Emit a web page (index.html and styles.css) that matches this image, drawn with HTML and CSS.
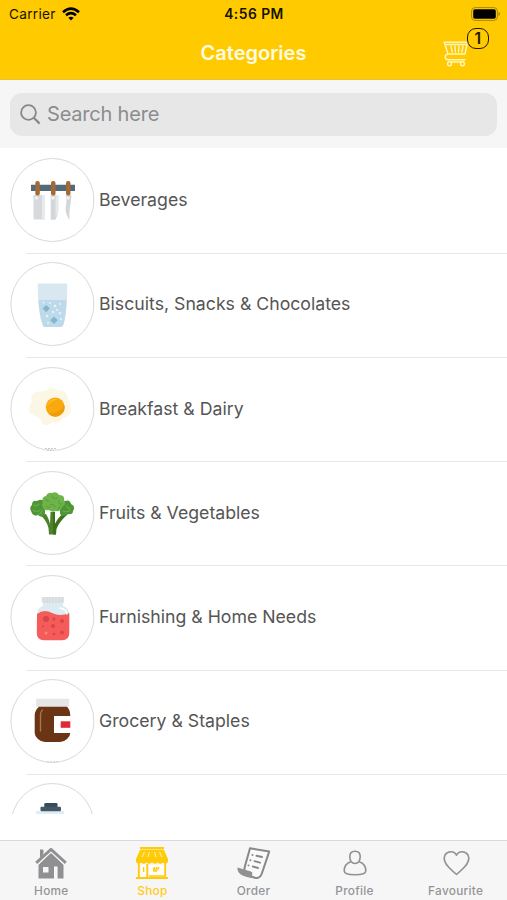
FILE: index.html
```html
<!DOCTYPE html>
<html lang="en">
<head>
<meta charset="utf-8">
<title>Categories</title>
<link rel="stylesheet" href="styles.css">
</head>
<body>
<div class="app">
  <header class="header">
    <div class="status">
      <div class="carrier"><span>Carrier</span>
        <svg class="wifi" width="18" height="14" viewBox="0 0 18 14"><g fill="none" stroke="#000" stroke-width="2.6"><path d="M1 5.2Q9-2 17 5.2"/><path d="M4 8.2Q9 4 14 8.2"/></g><path d="M6.4 10.8Q9 8.5 11.6 10.8L9 13.4Z"/></svg>
      </div>
      <span class="time">4:56 PM</span>
      <svg class="battery" width="30" height="14" viewBox="0 0 30 14"><rect x=".6" y=".6" width="25.8" height="12.8" rx="3.5" fill="none" stroke="#a88911"/><rect x="2.2" y="2.2" width="22.6" height="9.6" rx="1.8"/><path d="M27.6 4.6Q30 7 27.6 9.4Z" fill="#8e7410"/></svg>
    </div>
    <div class="navbar">
      <h1 class="title">Categories</h1>
      <div class="cart">
        <svg width="26" height="28" viewBox="0 0 26 28" fill="none" stroke="#fff6bd" stroke-width="1.4" stroke-linecap="round" stroke-linejoin="round"><path d="M1 2.2H24.5L22 14H5L1.3 2.2M3.2 4.5H24M5 14Q2.2 14.4 2.2 17Q2.2 19.8 5 19.8H22M8 6.2L9.2 12M12 6.2L12.4 12M16 6.2L15.5 12M20 6.2L18.8 12"/><circle cx="6.5" cy="23.8" r="2"/><circle cx="19.5" cy="23.8" r="2"/><path d="M8.5 22H17.5"/></svg>
        <span class="badge">1</span>
      </div>
    </div>
  </header>

  <div class="searchbar">
    <div class="field">
      <svg width="21" height="21" viewBox="0 0 21 21" fill="none" stroke="#88888b" stroke-width="1.8"><circle cx="8.5" cy="8.5" r="7.4"/><path d="M13.8 13.8L19.6 19.6" stroke-width="2.2"/></svg>
      <span>Search here</span>
    </div>
  </div>

  <main class="list">
    <div class="row">
      <svg class="thumb" viewBox="0 0 84 84"><circle class="ring" cx="42.4" cy="42" r="41.5"/>
        <path fill="#526b7c" d="M21 26.7H65V33H21z"/>
        <path fill="#d6dadd" d="M23.5 37H35V61.5H23.5z"/><path fill="#e8eaec" d="M32 37H35V61.5H32z"/>
        <path fill="#d3d7da" d="M40.7 37H48.3V52Q47.8 58 45.5 61.7H40.7z"/><path fill="#e6e8ea" d="M45.5 37H48.3V52Q47.8 56 45.5 59z"/>
        <path fill="#d3d7da" d="M56 37H61.5Q61 44 60 49Q59 55 59.5 62Q55.5 56 55.5 50Q57 45 56 37z"/>
        <g fill="#f4f6f7"><circle cx="26.5" cy="40" r="1.5"/><circle cx="43" cy="40" r="1.5"/><circle cx="58" cy="40" r="1.5"/></g>
        <g fill="#a56a32"><rect x="25.3" y="23" width="4.5" height="14.5" rx="2"/><rect x="41" y="23" width="4.5" height="14.5" rx="2"/><rect x="56" y="23" width="4.5" height="14.5" rx="2"/></g>
      </svg>
      <div class="label">Beverages</div>
    </div>
    <div class="row">
      <svg class="thumb" viewBox="0 0 84 84"><circle class="ring" cx="42.4" cy="42" r="41.5"/>
        <path fill="#d8e7f0" d="M27.7 23Q27.7 21.5 29 21.5H56Q57.5 21.5 57.3 23Q57 52 53.5 62Q53 65 50.5 65H35Q33 65 32.5 62Q28 52 27.7 23z"/>
        <path fill="#bddaea" d="M28.6 38H56.6Q56 55 53.5 62Q53 65 50.5 65H35Q33 65 32.5 62Q29.5 54 28.6 38z"/>
        <path fill="#86b6cf" d="M36.2 43L39.8 46.6L36.2 50.2L32.6 46.6zM44 54.5L47.8 58.3L44 62.1L40.2 58.3z"/>
        <g fill="#e6f3fa"><circle cx="40" cy="41" r="1"/><circle cx="45" cy="44" r="1.3"/><circle cx="50" cy="42" r="1"/><circle cx="43" cy="50" r="1.2"/><circle cx="50" cy="51" r="1.2"/><circle cx="37" cy="54" r="1.2"/><circle cx="38" cy="61" r="1"/><circle cx="33.5" cy="40.5" r="1"/><circle cx="47" cy="48" r="1"/><circle cx="51" cy="57" r="1"/></g>
      </svg>
      <div class="label">Biscuits, Snacks &amp; Chocolates</div>
    </div>
    <div class="row">
      <svg class="thumb" viewBox="0 0 84 84"><circle class="ring" cx="42.4" cy="42" r="41.5"/>
        <path fill="#fcf7e4" d="M27 24.5Q33 25 37 23Q43 19.5 48 23Q58 24 58 32Q62 38 60.5 44Q59 50 53 51Q50 57 43 55Q37 60 32 57Q31 50 25 49Q17 46 19 40Q23 35 21 30Q22 26 27 24.5z"/>
        <circle cx="45.2" cy="40" r="9.4" fill="#f9a90e"/><path fill="#ef9b0b" d="M54.4 38A9.4 9.4 0 0 1 38.5 46.7Q50 46 54.4 38z"/><path fill="#fbbb2b" d="M37 39A8.5 8.5 0 0 1 48 32.2Q40 35 37 39z"/>
        <path stroke="#c9c9c9" stroke-dasharray="2 1" d="M35 81.5H46M37 83H44"/>
      </svg>
      <div class="label">Breakfast &amp; Dairy</div>
    </div>
    <div class="row">
      <svg class="thumb" viewBox="0 0 84 84"><circle class="ring" cx="42.4" cy="42" r="41.5"/>
        <path fill="#4c8129" d="M30 44L36 43Q40 50 40 54L40.5 41H45L45 53Q48 46 53 43L58 43Q49 51 46.5 58L46 63.4H39L38.5 57Q36 48 30 44z"/>
        <path fill="#3b701e" d="M43 41H45V53L53 43L56 44Q48 51 46 58V63.4H43z"/>
        <path fill="#4e9635" d="M21 40Q19 36 22 34Q22 29 27 30Q32 27 35 31V43Q32 48 28 44Q23 46 21 40zM63 40Q66 35 61 33Q60 28 55 30Q51 29 50 33V43Q53 47 57 43Q63 44 63 40z"/>
        <path fill="#6fb44a" d="M33 32Q31 26 36 25Q38 21 42 22Q47 20 49 24Q55 24 54 29Q57 34 52 36Q51 41 46 40Q42 42 39 39Q33 40 33 36Q31 34 33 32z"/>
        <g fill="none" stroke="#559b38" stroke-width="1" stroke-linecap="round"><path d="M36 28Q36 31 39 30M42 25Q43 29 47 27M40 34Q44 32 45 36M49 30Q48 34 52 33M36 35Q38 38 40 36M48 38Q50 38 50 35"/></g>
        <g fill="none" stroke="#68ad47" stroke-width="1.1" stroke-linecap="round"><path d="M24 34Q26 36 29 33M23 39Q27 42 30 39M28 43Q32 43 32 39M57 34Q56 37 60 37M53 40Q57 42 60 39"/></g>
      </svg>
      <div class="label">Fruits &amp; Vegetables</div>
    </div>
    <div class="row">
      <svg class="thumb" viewBox="0 0 84 84"><circle class="ring" cx="42.4" cy="42" r="41.5"/>
        <path fill="#dbebf1" d="M33 27H53V31Q59.5 33 59.3 41V44H27V40Q27 33 33 31z"/>
        <rect x="31.7" y="22" width="22.4" height="6" rx="1" fill="#e1e4e7"/><path stroke="#ced4d8" stroke-width="1" d="M34 22V28M37 22V28M40 22V28M43 22V28M46 22V28M49 22V28M52 22V28"/>
        <path fill="#f45b59" d="M27 39Q34 33.5 42 38Q50 42 59.3 38V58Q59.3 65.2 52 65.2H34Q26.8 65.2 26.8 58z"/>
        <path fill="none" stroke="#fff" stroke-width="1.5" stroke-linecap="round" d="M50 33Q56 34 57 39"/>
        <g fill="#d9454a"><circle cx="36" cy="44" r="3"/><circle cx="44" cy="44" r="1.5"/><circle cx="52" cy="46" r="2"/><circle cx="43" cy="51" r="2"/><circle cx="33" cy="51" r="1"/><circle cx="52" cy="57.5" r="2"/><circle cx="44" cy="59" r="1.3"/></g><circle cx="36" cy="58" r="1.5" fill="#f98a80"/>
      </svg>
      <div class="label">Furnishing &amp; Home Needs</div>
    </div>
    <div class="row">
      <svg class="thumb" viewBox="0 0 84 84"><circle class="ring" cx="42.4" cy="42" r="41.5"/>
        <rect x="26.2" y="19.7" width="33" height="8.2" rx="1" fill="#e6e6e7"/>
        <path fill="#6b3414" d="M29 27.7H57Q60.3 31 60.3 37V54Q60.3 57 57 60Q54 63 50 63H35Q31 63 28 60Q24.7 57 24.7 54V36Q25 31 29 27.7z"/>
        <path fill="none" stroke="#a9754c" stroke-width="1.4" stroke-linecap="round" d="M32.5 31Q30.5 33 30.5 36V52"/>
        <path fill="#fff" d="M44 37H61V54H44z"/><path fill="#df2935" d="M50.7 42.3H60.3V48.8H50.7z"/>
        <path stroke="#d2d2d2" stroke-dasharray="2 1" d="M37 82.8H48"/>
      </svg>
      <div class="label">Grocery &amp; Staples</div>
    </div>
    <div class="row">
      <svg class="thumb" viewBox="0 0 84 84"><circle class="ring" cx="42.4" cy="42" r="41.5"/>
        <path fill="#dceff6" d="M26 28H54V40H26z"/><rect x="34.3" y="20" width="13.2" height="6" rx="1.3" fill="#3a4b59"/><rect x="30.5" y="23.8" width="20.5" height="4.5" rx="1" fill="#455867"/>
      </svg>
    </div>
  </main>

  <nav class="tabs">
    <div class="tab">
      <svg viewBox="0 0 34 34"><path fill="#909092" d="M6 4H9.5V9L6 12zM4.5 18.5L17 6.5L29.5 18.5V32.5H23.6V20.5H20V32.5H4.5z"/><path fill="none" stroke="#f7f6f7" stroke-width="4.6" d="M1.5 18.2L17 3.8L32.5 18.2"/><path fill="none" stroke="#909092" stroke-width="2.8" stroke-linejoin="round" d="M2.2 16.9L17 3.4L31.8 16.9"/><path fill="#909092" d="M6 3.5H9V9L6 11.7z"/><path fill="#f7f6f7" d="M9 21H14.5V26.5H9z"/></svg>
      <span>Home</span>
    </div>
    <div class="tab active">
      <svg viewBox="0 0 34 34"><path fill="#ffcb08" d="M5 1H29V3.4H5zM5 4H29L33 13V16Q30.5 19 28 16.4Q25.3 19 22.6 16.4Q20 19 17 16.4Q14.2 19 11.4 16.4Q8.7 19 6 16.4Q3.5 19 1 16V13z"/><path fill="none" stroke="#ffcb08" stroke-width="1.8" d="M3.8 17V31.5M30.2 17V31.5M1 32H33M12.3 18V32"/><g fill="none" stroke="#fff5ca" stroke-width="1"><path d="M9.5 6L7 11M14.5 6L12.8 11M19.5 6L21 11M24.5 6L27 11"/></g><path fill="#fffdf5" d="M6 19H11V31H6zM14 19H29V29.7H14z"/><path fill="none" stroke="#ffcb08" stroke-width="1.3" d="M14 30H29M8.6 21V26M18.5 25L20 21M20.5 25.5L22 21M22.5 24L24 21M18.5 22L19 25H22"/></svg>
      <span>Shop</span>
    </div>
    <div class="tab">
      <svg viewBox="0 0 34 34"><path fill="#f9f9f9" stroke="#888889" stroke-width="2" stroke-linejoin="round" d="M13 2.2L32.2 5.6L25 27Q23 33 18 31.8L6.5 28L8 20z"/><path fill="#909092" d="M.4 21.5L14 25.5Q16 26 15.2 28Q14.5 30.5 18.5 32.5Q7 31 3.2 28Q.3 25.5.4 21.5z"/><g stroke="#888889" stroke-width="1.9" stroke-linecap="round"><path d="M19.5 9.8L25 11M17.5 15.2L23 16.7M15.8 20.5L21 22M15.4 9H15.5M13.4 14.2H13.5M11.5 19.4H11.6"/></g></svg>
      <span>Order</span>
    </div>
    <div class="tab">
      <svg viewBox="0 0 34 34" fill="none" stroke="#909092" stroke-width="1.6" stroke-linejoin="round"><path d="M17 5.2Q22.3 5.2 22.2 10.8Q22 17.5 17 17.5Q12 17.5 11.8 10.8Q11.7 5.2 17 5.2z"/><path d="M12.8 15.7Q6 18 6.2 25Q6.3 28.8 17 28.8Q27.7 28.8 27.8 25Q28 18 21.2 15.7"/></svg>
      <span>Profile</span>
    </div>
    <div class="tab">
      <svg viewBox="0 0 34 34" fill="none" stroke="#909092" stroke-width="1.6" stroke-linejoin="round"><path d="M17.5 9.2C15.3 4.5 8.5 4.8 6 9C3.5 14 7.1 18.5 10 21.5Q13 24.7 17.5 28.5Q22 24.7 25 21.5C27.9 18.5 31.5 14 29 9C26.5 4.8 19.7 4.5 17.5 9.2z"/></svg>
      <span>Favourite</span>
    </div>
  </nav>
</div>
</body>
</html>
```
FILE: styles.css
```css
* { box-sizing: border-box; }
body { margin: 0; background: #fff; font-family: Inter, "Liberation Sans", sans-serif; }
.app { width: 507px; height: 900px; display: flex; flex-direction: column; overflow: hidden; }
.header { height: 79.5px; flex: none; background: #ffcb00; border-bottom: 1px solid #e5c239; }
.status { height: 27px; display: grid; grid-template-columns: 1fr auto 1fr; align-items: center; padding: 0 6px 0 9px; font-size: 13.6px; color: #161200; }
.carrier { display: flex; align-items: center; gap: 6px; }
.carrier span { letter-spacing: .3px; }
.time { font-weight: 600; font-size: 13.8px; letter-spacing: .5px; margin-right: 2px; }
.battery { justify-self: end; }
.navbar { height: 51px; display: grid; grid-template-columns: 1fr auto 1fr; align-items: center; }
.title { grid-column: 2; margin: 0; font-size: 20px; line-height: 24px; font-weight: 600; color: #fffbe2; }
.cart { position: relative; justify-self: end; width: 26px; height: 28px; margin-right: 38px; top: 1px; }
.cart svg { display: block; }
.badge { position: absolute; left: 24px; top: -12px; width: 21.5px; height: 21px; border: 1.5px solid #1d1800; border-radius: 9px; text-align: center; font-size: 15.5px; line-height: 19px; font-weight: 600; color: #1d1800; }
.searchbar { height: 68.5px; flex: none; padding: 13px 10px 12px; background: #f6f6f6; }
.field { height: 43.5px; border-radius: 12px; background: #e7e7e7; display: flex; align-items: center; gap: 6px; padding-left: 10px; color: #8c8c90; font-size: 20px; letter-spacing: -.2px; }
.field svg { flex: none; }
.list { height: 666px; flex: none; overflow: hidden; }
.row { height: 104.2px; display: flex; padding: 10.3px 0 0 10px; gap: 5px; background: linear-gradient(#e7e7e7, #e7e7e7) 26px 0 / 100% 1px no-repeat; }
.row:first-child { background: none; }
.row + .row { position: relative; }
.list { padding-top: 0; }
.row + .row { background-position: 26px .6px; }
.thumb { width: 84px; height: 84px; flex: none; overflow: visible; }
.ring { fill: #fff; stroke: #d9d9d9; stroke-width: 1; }
.label { height: 83px; display: flex; align-items: center; font-size: 17.7px; color: #555; white-space: nowrap; }
.tabs { height: 60px; margin-top: auto; flex: none; display: grid; grid-template-columns: repeat(5, 101.1px); justify-content: center; background: #f7f6f7; border-top: 1px solid #dad9da; }
.tab { display: flex; flex-direction: column; align-items: center; padding-top: 5px; color: #949496; font-size: 11.8px; line-height: 15px; font-weight: 500; letter-spacing: .3px; }
.tab svg { width: 34px; height: 34px; display: block; margin-bottom: 4px; }
.active { color: #ffcb18; }
```
